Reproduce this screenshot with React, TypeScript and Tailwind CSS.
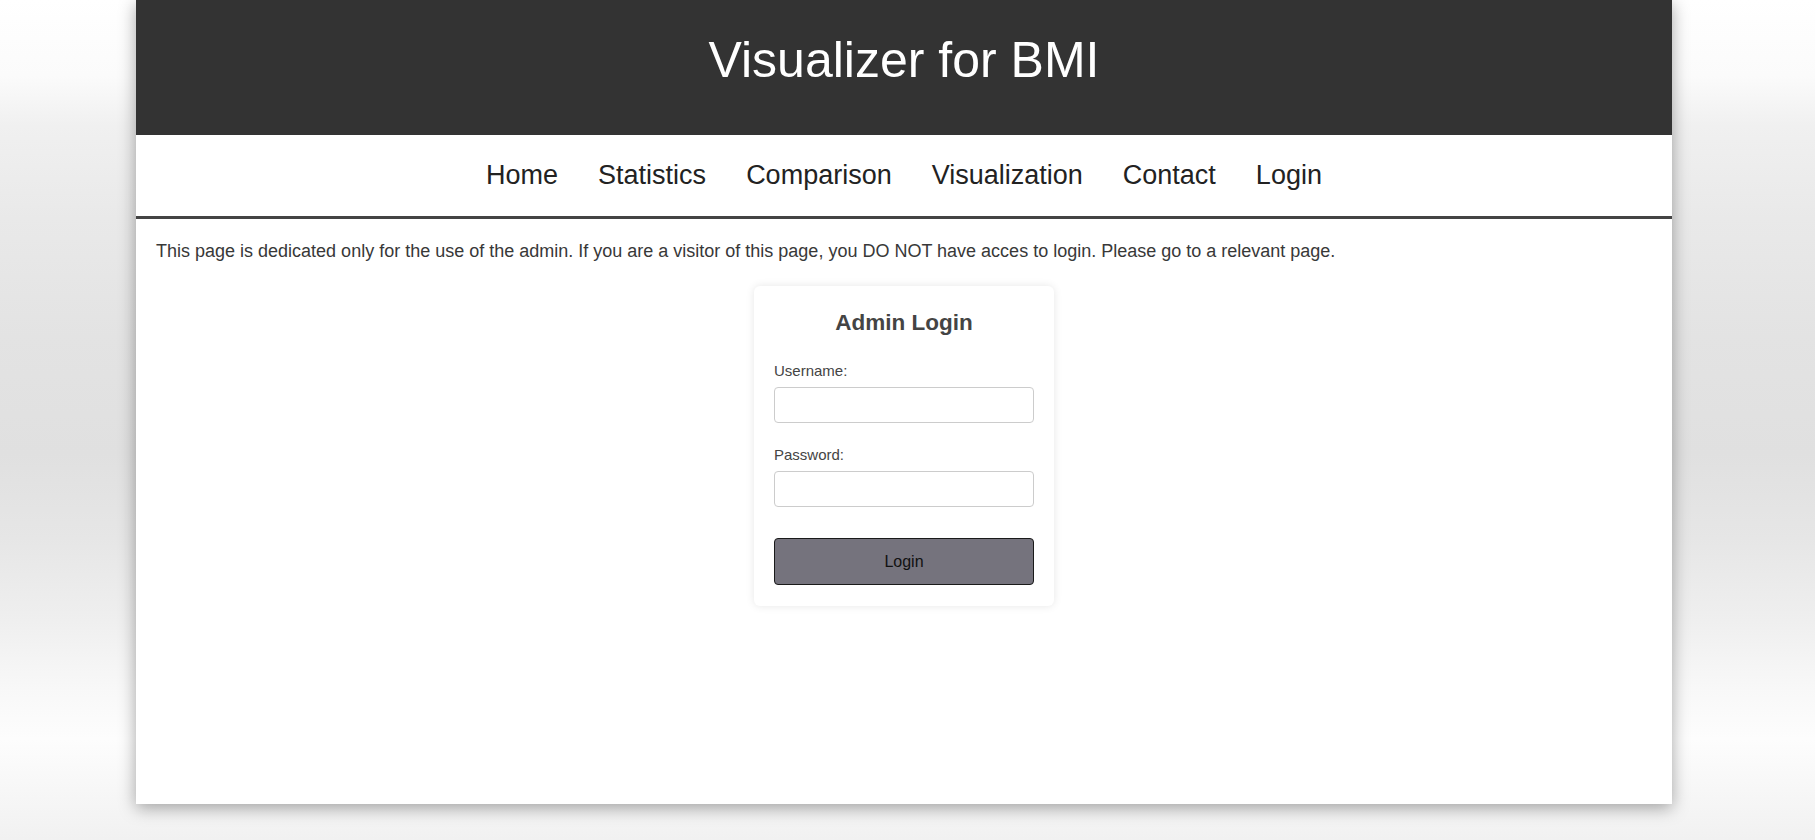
import React from 'react';

const navLinks = ['Home', 'Statistics', 'Comparison', 'Visualization', 'Contact', 'Login'];

const App: React.FC = () => {
  return (
    <div className="min-h-screen w-full font-['Liberation_Sans',Arial,sans-serif] bg-[linear-gradient(180deg,#ffffff_0%,#fbfbfb_9%,#f0f0f0_15%,#e9e9e9_26%,#e3e3e3_40%,#e0e0e0_54%,#e6e6e6_64%,#efefef_74%,#f8f8f8_82%,#fdfdfd_88%,#f1f1f1_100%)]">
      <div className="ml-[136px] w-[1536px] h-[804px] bg-white shadow-[0_4px_16px_rgba(0,0,0,0.35)] flex flex-col">
        {/* Header */}
        <header className="h-[135px] bg-[#333333] pt-[32px] text-center">
          <h1 className="text-[50px] leading-[56px] text-white font-normal">Visualizer for BMI</h1>
        </header>

        {/* Nav */}
        <nav className="h-[84px] border-b-[3px] border-[#444444] flex items-center justify-center">
          {navLinks.map((link) => (
            <a key={link} href="#" className="px-[20px] text-[27px] leading-[31px] text-[#222222]">
              {link}
            </a>
          ))}
        </nav>

        {/* Content */}
        <div className="px-[20px] pt-[22px]">
          <p className="text-[18px] leading-[21px] text-[#383838]">
            This page is dedicated only for the use of the admin. If you are a visitor of this page, you DO NOT have acces to login. Please go to a relevant page.
          </p>

          <div className="mt-[24px] mx-auto w-[300px] bg-white rounded-[6px] shadow-[0_0_8px_rgba(0,0,0,0.1)] p-[20px] pb-[21px]">
            <h2 className="text-center text-[22.5px] leading-[33px] font-bold text-[#444444]">Admin Login</h2>

            <label className="block mt-[23px] text-[15px] leading-[17px] text-[#444444]">Username:</label>
            <input
              type="text"
              className="block mt-[8px] w-full h-[36px] border border-[#cccccc] rounded-[4px] px-2 outline-none"
            />

            <label className="block mt-[23px] text-[15px] leading-[17px] text-[#444444]">Password:</label>
            <input
              type="password"
              className="block mt-[8px] w-full h-[36px] border border-[#cccccc] rounded-[4px] px-2 outline-none"
            />

            <button className="block mt-[31px] w-full h-[47px] bg-[#75737d] border border-[#1a1a1a] rounded-[4px] text-[16px] text-[#111111]">
              Login
            </button>
          </div>
        </div>
      </div>
    </div>
  );
};

export default App;
